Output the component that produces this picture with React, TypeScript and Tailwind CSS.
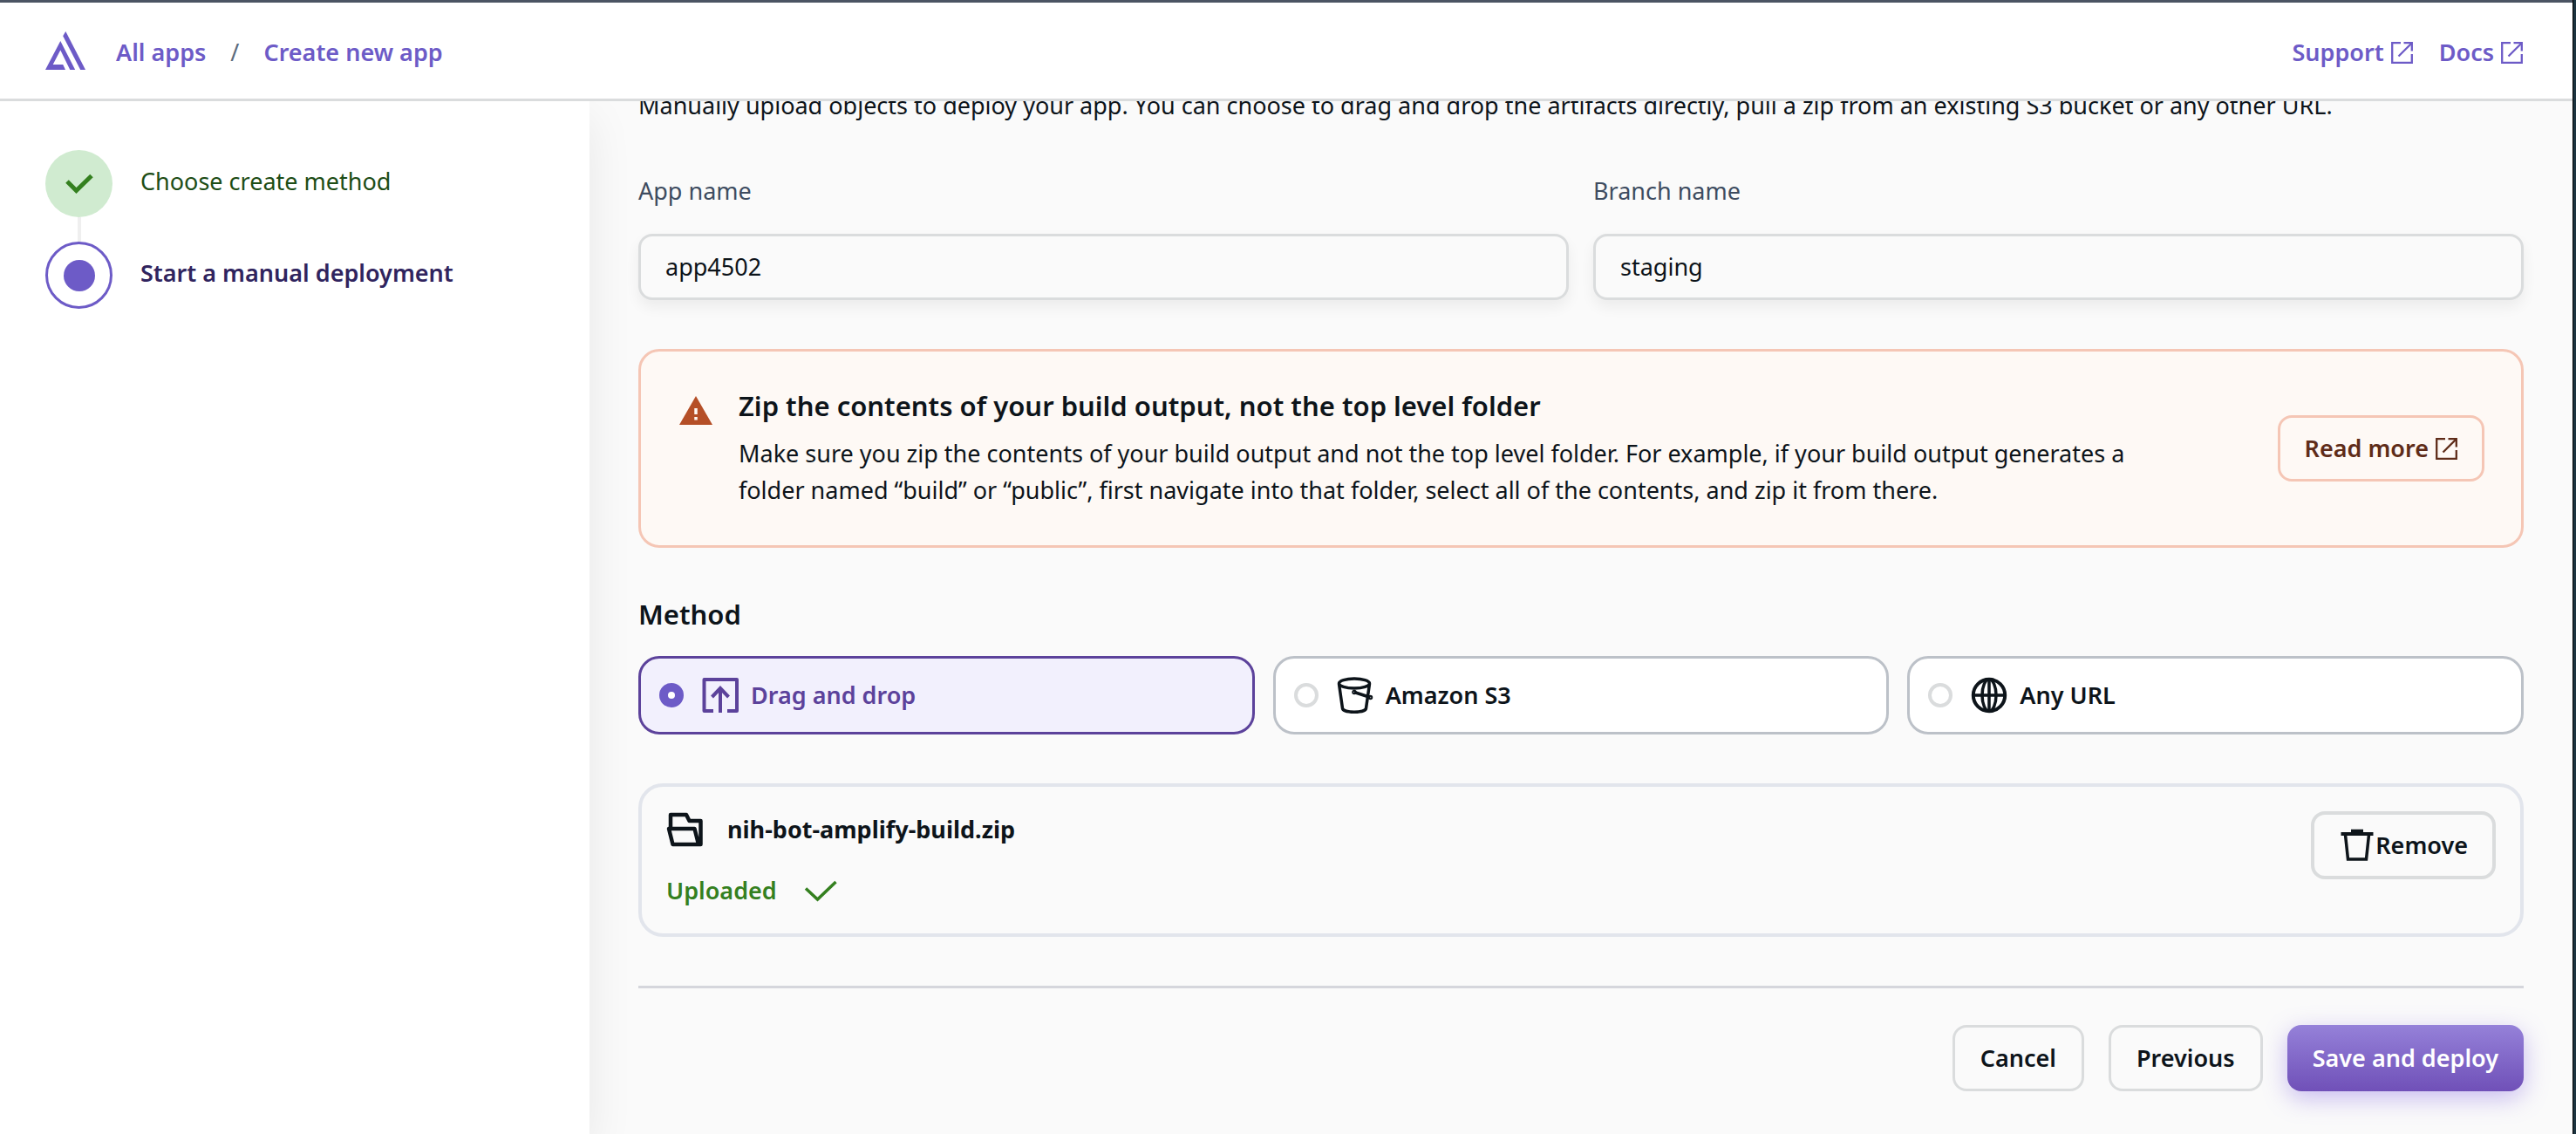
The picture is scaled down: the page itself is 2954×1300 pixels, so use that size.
import { useState } from "react";
import type { ReactNode } from "react";

function AmplifyLogo() {
  return (
    <svg viewBox="0 0 46 44" className="h-11 w-[46px] shrink-0" fill="currentColor" aria-hidden="true">
      <path d="M0 44 L17.3 11 L34.2 44 H28.3 L17.3 21.5 L8.7 38 H20.2 L23 44 Z" />
      <path d="M23.3 0 L46 44 H40.2 L20.2 5.2 Z" />
    </svg>
  );
}

function ExternalIcon() {
  return (
    <svg viewBox="0 0 25 25" className="size-[25px] shrink-0" fill="none" stroke="currentColor" strokeWidth="2.3" aria-hidden="true">
      <path d="M11 1.2 H1.2 V23.8 H23.8 V14" />
      <path d="M14.5 1.2 H23.8 V10.5" />
      <path d="M8.5 16.5 L23.8 1.2" />
    </svg>
  );
}

function UploadIcon() {
  return (
    <svg viewBox="0 0 42 42" className="size-[42px] shrink-0" fill="none" stroke="currentColor" strokeWidth="4" strokeLinejoin="round" aria-hidden="true">
      <path d="M13 39 H2.5 V3 H40 V39 H29" />
      <path d="M21 41 V13" />
      <path d="M11.5 23 L21 13 L30.5 23" strokeLinejoin="miter" />
    </svg>
  );
}

function BucketIcon() {
  return (
    <svg viewBox="0 0 42 42" className="size-[42px] shrink-0" fill="none" stroke="currentColor" strokeWidth="3.5" aria-hidden="true">
      <ellipse cx="20" cy="7.5" rx="17.5" ry="5.5" />
      <path d="M2.5 8 L6.5 36 C7 41.5 33 41.5 33.5 36 L37.5 8" />
      <path d="M20 17.5 L38.5 23.5" />
      <circle cx="20" cy="17.5" r="1" />
      <circle cx="38.5" cy="23.5" r="1" />
    </svg>
  );
}

function GlobeIcon() {
  return (
    <svg viewBox="0 0 42 42" className="size-[42px] shrink-0" fill="none" stroke="currentColor" strokeWidth="3.5" aria-hidden="true">
      <circle cx="21" cy="21" r="18.2" strokeWidth="4" />
      <ellipse cx="21" cy="21" rx="8" ry="18.2" />
      <path d="M21 2.5 V39.5 M2.5 21 H39.5" />
    </svg>
  );
}

function FolderIcon() {
  return (
    <svg viewBox="0 0 42 42" className="size-[42px] shrink-0" fill="none" stroke="currentColor" strokeWidth="4.5" strokeLinejoin="round" aria-hidden="true">
      <path d="M5 19 V4 H23 L26.5 11 H39.5 V38 H7.5 L3 20 H32.5 L37 38" />
    </svg>
  );
}

function TrashIcon() {
  return (
    <svg viewBox="0 0 42 42" className="size-[42px] shrink-0" fill="none" stroke="currentColor" strokeWidth="3.5" aria-hidden="true">
      <path d="M2.5 8 H39.5" strokeWidth="4" />
      <path d="M14 4.5 H28" />
      <path d="M7.5 9 L10.5 37 H31.5 L34.5 9" />
    </svg>
  );
}

function WarningIcon() {
  return (
    <svg viewBox="0 0 42 42" className="mt-1 size-[42px] shrink-0" aria-hidden="true">
      <path d="M21 5 L40 38 H2 Z" fill="#b54f27" />
      <path d="M21 19 V26 M21 29 V32.5" stroke="#fef9f5" strokeWidth="3.5" />
    </svg>
  );
}

const outlineButton =
  "rounded-2xl border-3 border-[#dadcdd] bg-[#fafafa] px-[29px] py-[14px] font-semibold text-[#0d141a]";

function TextField({ id, label, value }: { id: string; label: string; value: string }) {
  return (
    <div className="flex min-w-0 flex-1 flex-col gap-7">
      <label htmlFor={id} className="text-[#3e4c60]">{label}</label>
      <input
        id={id}
        type="text"
        defaultValue={value}
        className="w-full rounded-2xl border-3 border-[#dadcdd] bg-[#fafafa] px-7 py-[14px] shadow-[0_8px_16px_rgba(0,0,0,0.06)] outline-none"
      />
    </div>
  );
}

function MethodOption({
  label,
  icon,
  selected,
  onSelect,
}: {
  label: string;
  icon: ReactNode;
  selected: boolean;
  onSelect: () => void;
}) {
  return (
    <label
      className={
        "flex cursor-pointer items-center rounded-3xl border-3 px-[21px] py-[21px] font-semibold " +
        (selected ? "border-[#5c429b] bg-[#f2f0fd] text-[#5c429b]" : "border-[#bcc1c8] bg-white")
      }
    >
      <input
        type="radio"
        name="method"
        checked={selected}
        onChange={onSelect}
        className="size-7 shrink-0 appearance-none rounded-full border-4 border-[#dadcdd] bg-white checked:border-10 checked:border-[#6d5bc7]"
      />
      <span className="ml-[21px]">{icon}</span>
      <span className="ml-[14px]">{label}</span>
    </label>
  );
}

export default function App() {
  const [method, setMethod] = useState("Drag and drop");
  const methods = [
    { label: "Drag and drop", icon: <UploadIcon /> },
    { label: "Amazon S3", icon: <BucketIcon /> },
    { label: "Any URL", icon: <GlobeIcon /> },
  ];

  return (
    <div className="flex min-h-screen bg-[#fafafa] font-['Noto_Sans',sans-serif] text-[27px] leading-[42px] text-[#0d141a]">
      <div className="flex min-w-0 flex-1 flex-col">
        <header className="relative z-20 flex items-center justify-between border-t-3 border-b-3 border-t-[#4b5463] border-b-[#dadcdd] bg-white py-8 pr-[57px] pl-[52px] font-semibold text-[#6d5bc7]">
          <nav aria-label="Breadcrumb" className="flex items-center">
            <a href="#home" aria-label="Amplify home"><AmplifyLogo /></a>
            <ol className="ml-[35px] flex items-center gap-7 pt-1">
              <li><a href="#apps">All apps</a></li>
              <li aria-hidden="true" className="font-normal text-[#5c6b7d]">/</li>
              <li><a href="#create">Create new app</a></li>
            </ol>
          </nav>
          <div className="flex items-center gap-[30px] pt-1">
            <a href="#support" className="flex items-center gap-2">Support <ExternalIcon /></a>
            <a href="#docs" className="flex items-center gap-2">Docs <ExternalIcon /></a>
          </div>
        </header>

        <div className="flex flex-1">
          <aside className="relative z-10 w-[676px] shrink-0 bg-white pt-14 pl-[52px] shadow-[0_20px_50px_rgba(0,0,0,0.08)]">
            <ol>
              <li className="flex items-start gap-8">
                <div className="flex flex-col items-center">
                  <svg viewBox="0 0 77 77" className="size-[77px]" aria-hidden="true">
                    <circle cx="38.5" cy="38.5" r="38.5" fill="#d0ebd0" />
                    <path d="M25 36 L35.5 46.5 L53 29.5" fill="none" stroke="#34801f" strokeWidth="5" />
                  </svg>
                  <span className="h-7 w-1 bg-[#efefef]" />
                </div>
                <span className="pt-[15px] text-[#1d4d16]">Choose create method</span>
              </li>
              <li className="flex items-start gap-8" aria-current="step">
                <span className="flex size-[77px] items-center justify-center rounded-full border-3 border-[#6d5bc7]">
                  <span className="size-9 rounded-full bg-[#6d5bc7]" />
                </span>
                <span className="pt-[15px] font-semibold text-[#30245e]">Start a manual deployment</span>
              </li>
            </ol>
          </aside>

          <main className="flex min-w-0 flex-1 flex-col gap-14 px-14 pb-[50px]">
            <p className="-mt-4">
              Manually upload objects to deploy your app. You can choose to drag and drop the artifacts directly, pull a
              zip from an existing S3 bucket or any other URL.
            </p>

            <div className="flex gap-7">
              <TextField id="app-name" label="App name" value="app4502" />
              <TextField id="branch-name" label="Branch name" value="staging" />
            </div>

            <section className="flex items-center rounded-3xl border-3 border-[#f5c6b5] bg-[#fef9f5] p-[42px]">
              <div className="flex flex-1 items-start gap-7">
                <WarningIcon />
                <div>
                  <h2 className="text-[31px] leading-10 font-semibold">
                    Zip the contents of your build output, not the top level folder
                  </h2>
                  <p className="mt-[14px]">
                    Make sure you zip the contents of your build output and not the top level folder. For example, if
                    your build output generates a folder named “build” or “public”, first navigate into that folder,
                    select all of the contents, and zip it from there.
                  </p>
                </div>
              </div>
              <a
                href="#read-more"
                className="ml-28 flex shrink-0 items-center gap-2 rounded-2xl border-3 border-[#f5c6b5] px-7 py-[14px] font-semibold text-[#5f2c19]"
              >
                Read more <ExternalIcon />
              </a>
            </section>

            <fieldset>
              <legend className="mb-7 text-[31px] leading-10 font-semibold">Method</legend>
              <div className="grid grid-cols-3 gap-[21px]">
                {methods.map((m) => (
                  <MethodOption
                    key={m.label}
                    label={m.label}
                    icon={m.icon}
                    selected={method === m.label}
                    onSelect={() => setMethod(m.label)}
                  />
                ))}
              </div>
            </fieldset>

            <section className="flex items-start justify-between rounded-[28px] border-4 border-[#e2e5ec] p-7">
              <div className="flex flex-col gap-7 font-semibold">
                <div className="flex items-center gap-7">
                  <FolderIcon />
                  <span className="font-bold">nih-bot-amplify-build.zip</span>
                </div>
                <div className="flex items-center gap-7 text-[#34801f]">
                  <span>Uploaded</span>
                  <svg viewBox="0 0 42 42" className="size-[42px]" fill="none" stroke="currentColor" strokeWidth="3.5" aria-hidden="true">
                    <path d="M5 18.5 L18.5 31 L39.5 11" />
                  </svg>
                </div>
              </div>
              <button type="button" className="flex items-center rounded-2xl border-4 border-[#dadcdd] px-7 py-[14px] font-semibold">
                <TrashIcon />
                Remove
              </button>
            </section>

            <div className="flex justify-end gap-7 border-t-3 border-[#d5d6dc] pt-[42px]">
              <button type="button" className={outlineButton}>Cancel</button>
              <button type="button" className={outlineButton}>Previous</button>
              <button
                type="button"
                className="rounded-2xl bg-linear-to-b from-[#9581d9] to-[#7050b8] px-[29px] py-[17px] font-semibold text-white shadow-[0_8px_28px_rgba(125,95,225,0.4)]"
              >
                Save and deploy
              </button>
            </div>
          </main>
        </div>
      </div>
      <div className="w-1 shrink-0 border-l border-black bg-[#1d3440]" />
    </div>
  );
}
